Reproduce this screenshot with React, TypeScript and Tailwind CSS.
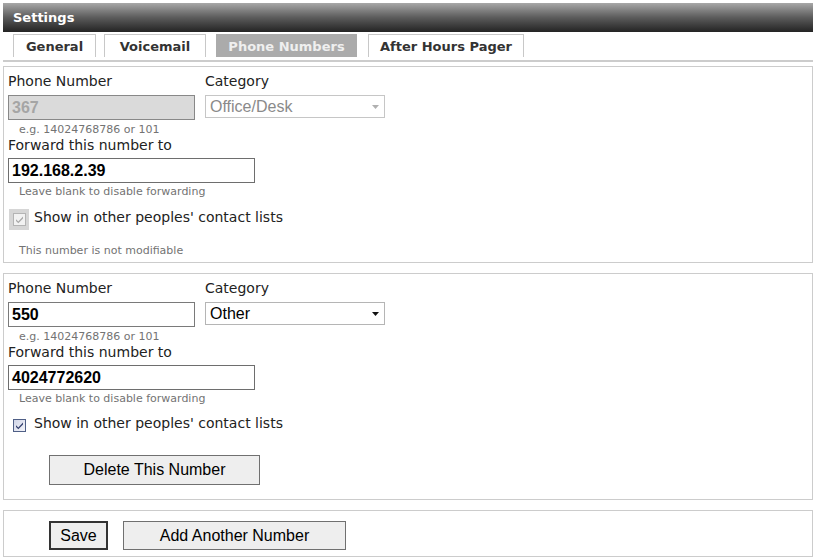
import React from 'react';

const tabs = [
  { name: 'General', cls: 'w-[83px]', active: false },
  { name: 'Voicemail', cls: 'w-[102px] ml-[8px]', active: false },
  { name: 'Phone Numbers', cls: 'w-[141px] ml-[10px]', active: true },
  { name: 'After Hours Pager', cls: 'w-[156px] ml-[11px]', active: false },
];

const Arrow = ({ color }: { color: string }) => (
  <svg width="7" height="4" viewBox="0 0 7 4" className="absolute right-[5px] top-[9px]">
    <path d="M0 0 L7 0 L3.5 4 Z" fill={color} />
  </svg>
);

const Check = ({ color }: { color: string }) => (
  <svg width="9" height="9" viewBox="0 0 9 9">
    <path d="M1 4.2 L3.3 6.6 L8 1.6 L8 3.4 L3.3 8.3 L1 6 Z" fill={color} />
  </svg>
);

type NumberProps = {
  phone: string;
  category: string;
  forward: string;
  locked?: boolean;
};

const NumberBlock = ({ phone, category, forward, locked }: NumberProps) => {
  return (
    <div className="border border-[#cccccc] pl-[4px] pt-[6px]">
      <div className="flex gap-[10px]">
        <div className="w-[187px]">
          <div className="text-[14px] leading-[17px] text-[#222] mb-[5px]">Phone Number</div>
          {locked ? (
            <div className="h-[25px] border border-[#888] bg-[#dadada] px-[3px] flex items-center font-['Liberation_Sans',Arial,sans-serif] text-[16px] font-bold text-[#a5a5a5]">
              {phone}
            </div>
          ) : (
            <div className="h-[25px] border border-[#7a7a7a] bg-white px-[3px] flex items-center font-['Liberation_Sans',Arial,sans-serif] text-[16px] font-bold text-black">
              {phone}
            </div>
          )}
        </div>
        <div className="w-[180px]">
          <div className="text-[14px] leading-[17px] text-[#222] mb-[5px]">Category</div>
          <div
            className={
              locked
                ? "relative h-[23px] border border-[#c6c6c6] bg-white pl-[4px] flex items-center font-['Liberation_Sans',Arial,sans-serif] text-[16px] text-[#8a8a8a]"
                : "relative h-[23px] border border-[#b5b5b5] bg-white pl-[4px] flex items-center font-['Liberation_Sans',Arial,sans-serif] text-[16px] text-black"
            }
          >
            {category}
            <Arrow color={locked ? '#b0b0b0' : '#111'} />
          </div>
        </div>
      </div>
      <div className="mt-[3px] pl-[11px] text-[11px] leading-[13px] text-[#737373]">e.g. 14024768786 or 101</div>
      <div className="mt-[1px] text-[14px] leading-[17px] text-[#222]">Forward this number to</div>
      <div className="mt-[4px] w-[247px] h-[25px] border border-[#6e6e6e] bg-white px-[3px] flex items-center font-['Liberation_Sans',Arial,sans-serif] text-[16px] font-bold text-black">
        {forward}
      </div>
      <div className="mt-[2px] pl-[11px] text-[11px] leading-[13px] text-[#737373]">Leave blank to disable forwarding</div>
      {locked ? (
        <>
          <div className="mt-[11px] flex items-start">
            <div className="ml-[1px] w-[20px] h-[21px] bg-[#d6d6d6] flex items-center justify-center">
              <div className="w-[13px] h-[13px] border border-[#b4b4b4] bg-[#f2f2f2] flex items-center justify-center">
                <Check color="#a8a8a8" />
              </div>
            </div>
            <div className="ml-[5px] text-[14px] leading-[17px] text-[#222]">Show in other peoples' contact lists</div>
          </div>
          <div className="mt-[14px] pb-[5px] pl-[11px] text-[11px] leading-[13px] text-[#737373]">This number is not modifiable</div>
        </>
      ) : (
        <>
          <div className="mt-[10px] flex items-start">
            <div className="ml-[5px] mt-[4px] w-[13px] h-[13px] border border-[#4f5f86] bg-gradient-to-br from-[#cfd4e6] to-[#f4f5fa] flex items-center justify-center">
              <Check color="#34406e" />
            </div>
            <div className="ml-[8px] text-[14px] leading-[17px] text-[#222]">Show in other peoples' contact lists</div>
          </div>
          <div className="pb-[14px]">
            <button className="mt-[23px] ml-[41px] w-[211px] h-[30px] border border-[#707070] bg-[#eeeeee] font-['Liberation_Sans',Arial,sans-serif] text-[16px] text-black">
              Delete This Number
            </button>
          </div>
        </>
      )}
    </div>
  );
};

export default function App() {
  return (
    <div className="w-[815px] h-[558px] bg-white pl-[3px] pr-[2px] pt-[3px] overflow-hidden font-['DejaVu_Sans',Verdana,sans-serif]">
      <div className="h-[29px] bg-gradient-to-b from-[#a8a8a8] via-[#5c5c5c] to-[#242424] flex items-center pl-[10px] text-white text-[13px] font-bold">
        Settings
      </div>
      <div className="mt-[2px] pl-[10px] flex">
        {tabs.map((t) =>
          t.active ? (
            <div key={t.name} className={`${t.cls} h-[23px] pt-[2px] bg-[#ababab] flex items-center justify-center text-[13px] font-bold text-[#efefef]`}>
              {t.name}
            </div>
          ) : (
            <div key={t.name} className={`${t.cls} h-[23px] pt-[2px] border border-b-0 border-[#c8c8c8] bg-white flex items-center justify-center text-[13px] font-bold text-[#333]`}>
              {t.name}
            </div>
          )
        )}
      </div>
      <div className="mt-[3px] h-[2px] bg-[#cccccc]" />
      <div className="mt-[4px] w-[810px]">
        <NumberBlock phone="367" category="Office/Desk" forward="192.168.2.39" locked />
      </div>
      <div className="mt-[10px] w-[810px]">
        <NumberBlock phone="550" category="Other" forward="4024772620" />
      </div>
      <div className="mt-[10px] w-[810px] border border-[#cccccc] pl-[4px] pt-[10px] pb-[6px] flex">
        <button className="ml-[41px] w-[59px] h-[29px] border-2 border-[#333] bg-[#eeeeee] font-['Liberation_Sans',Arial,sans-serif] text-[16px] text-black">
          Save
        </button>
        <button className="ml-[15px] w-[223px] h-[29px] border border-[#707070] bg-[#eeeeee] font-['Liberation_Sans',Arial,sans-serif] text-[16px] text-black">
          Add Another Number
        </button>
      </div>
    </div>
  );
}
